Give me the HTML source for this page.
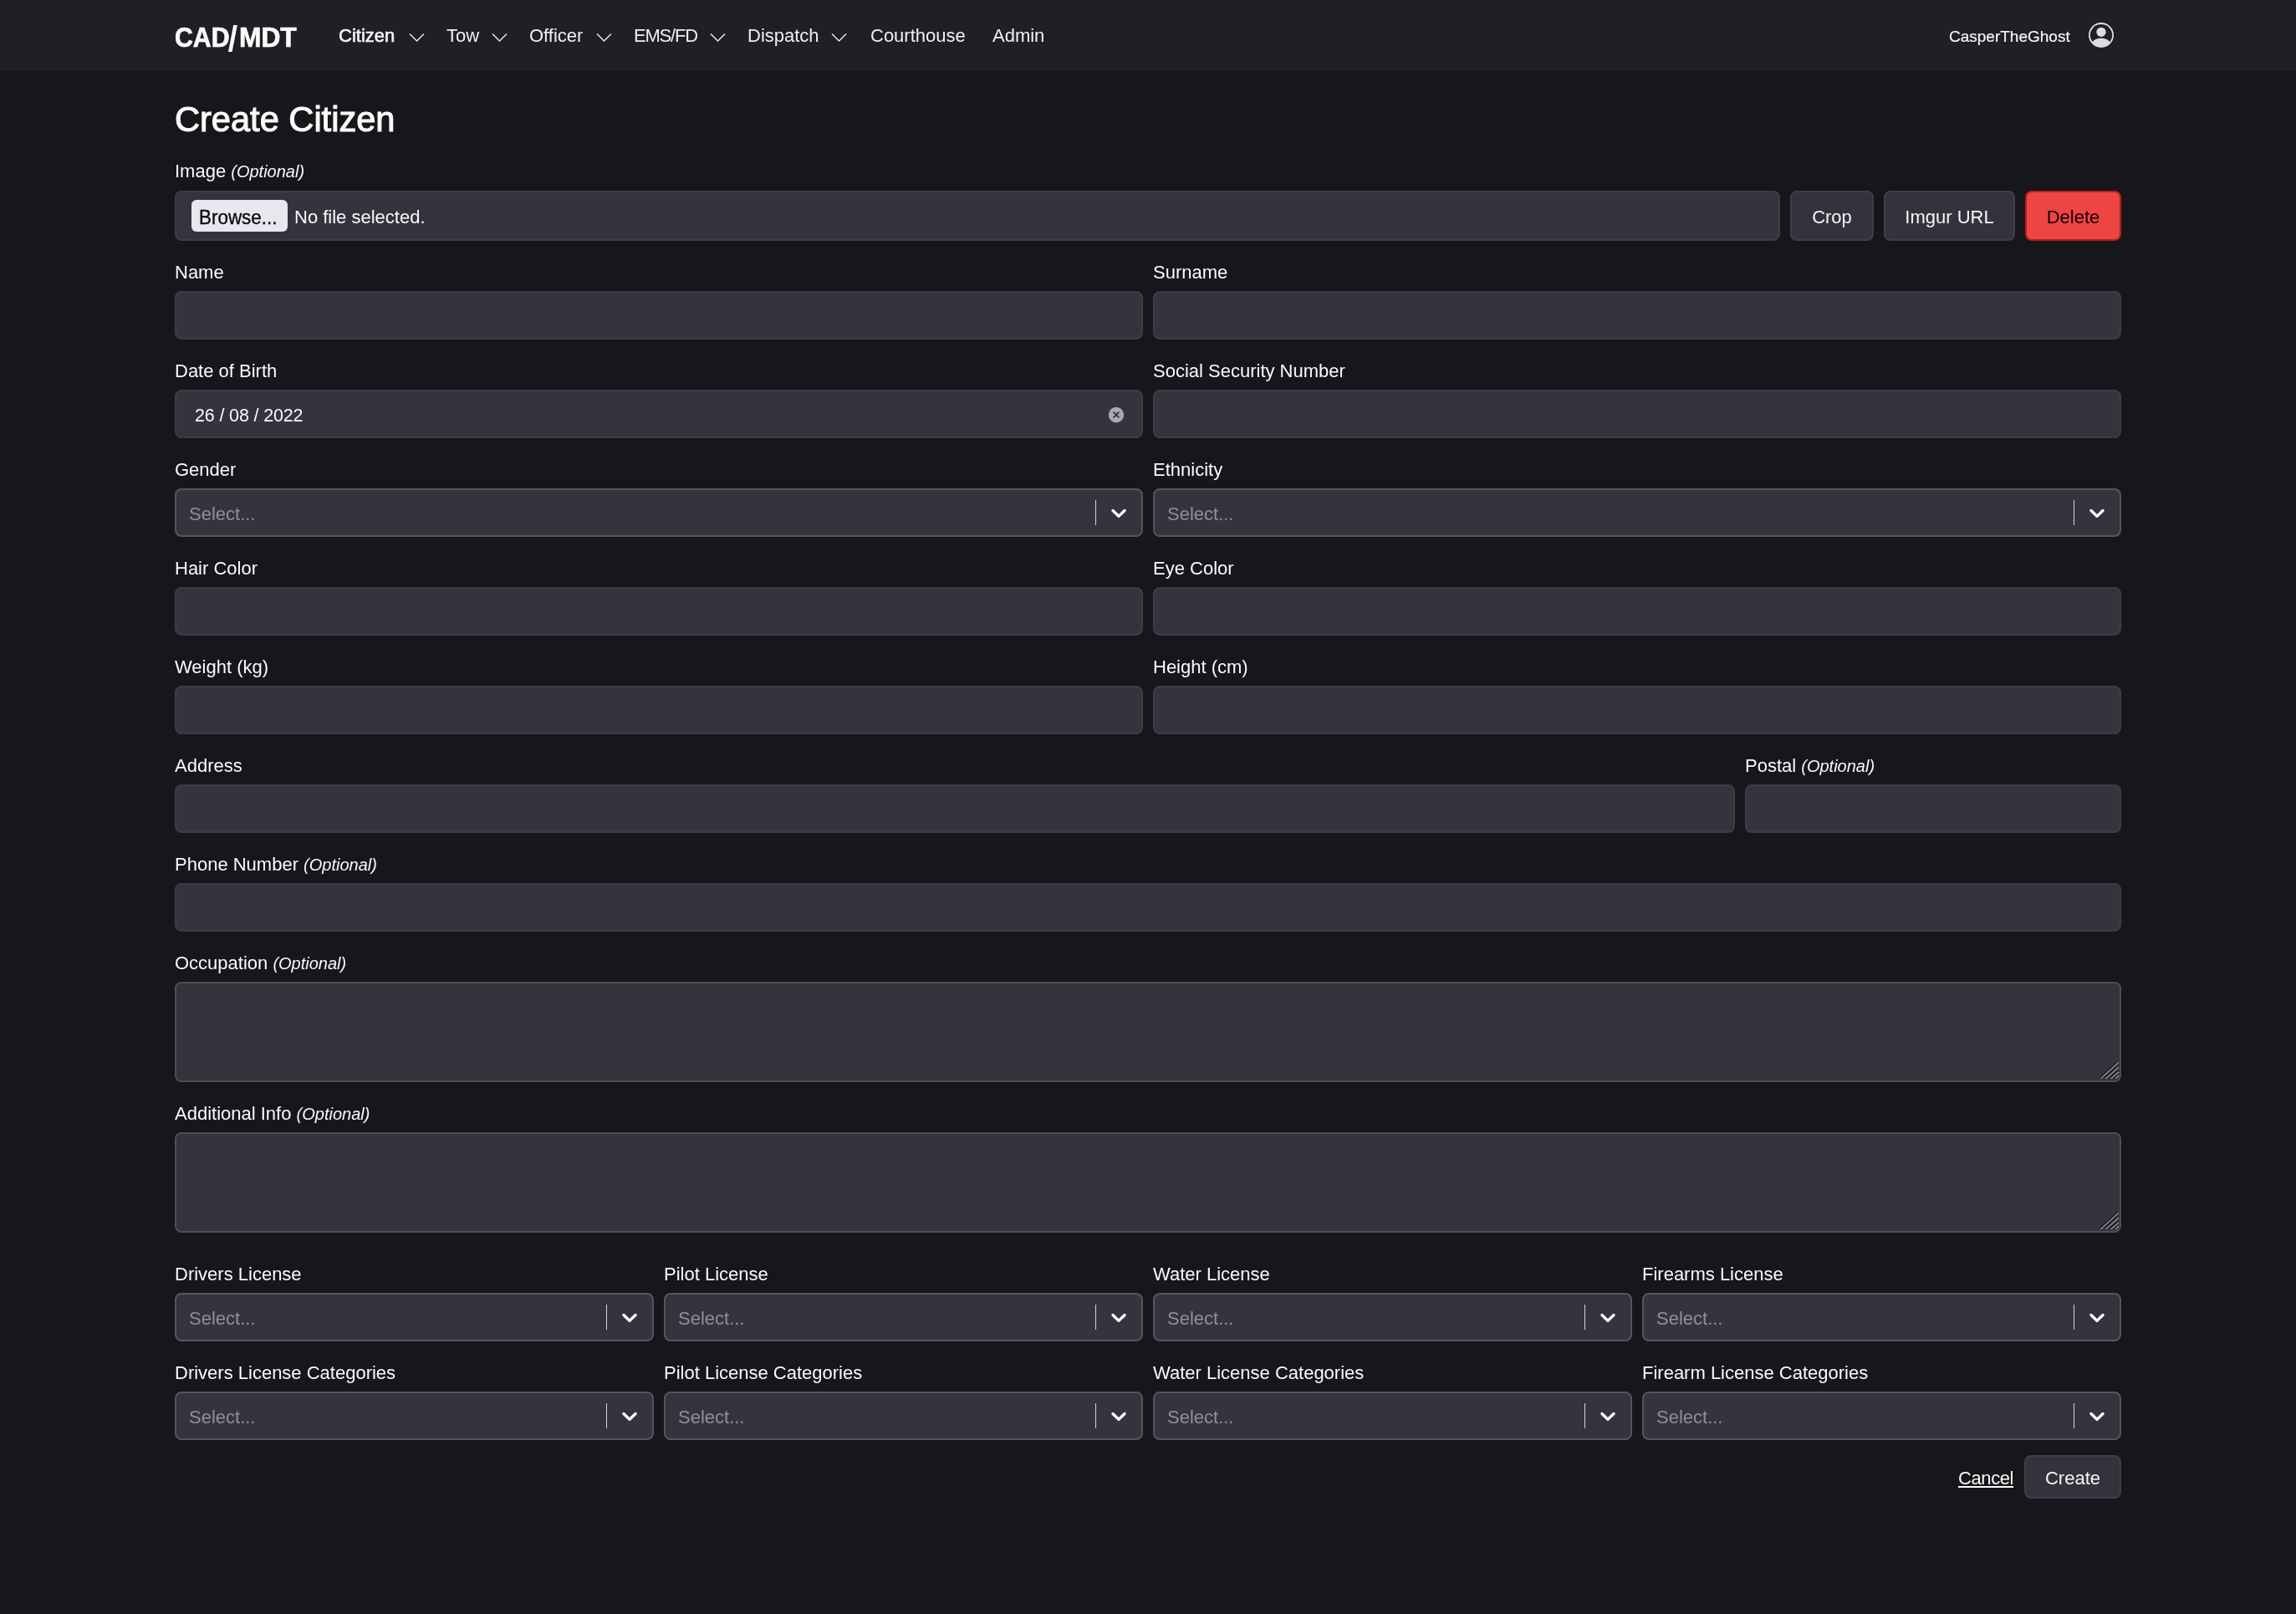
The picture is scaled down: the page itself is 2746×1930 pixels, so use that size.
<!DOCTYPE html>
<html><head><meta charset="utf-8"><title>Create Citizen</title>
<style>
*{box-sizing:border-box;margin:0;padding:0}
html,body{width:2746px;height:1930px;overflow:hidden;background:#17161b;font-family:"Liberation Sans",sans-serif;color:#fafafa}
.a{position:absolute;white-space:nowrap;line-height:1}
#nav{position:absolute;left:0;top:0;width:2746px;height:84px;background:#201f25}
.logo{font-weight:700;font-size:33px;transform-origin:0 0;-webkit-text-stroke:0.7px #fafafa}
.ni{font-size:22px;color:#f0f0f2}
.lbl{font-size:22px;color:#fafafa}
.lbl i{font-style:italic;font-size:20px}
.inp{position:absolute;height:58px;background:#35343e;border:2px solid #3d3c47;border-radius:8px}
.ta{position:absolute;background:#35343e;border:2px solid #4f4e57;border-radius:8px}
.sel{position:absolute;height:58px;background:#35343e;border:2px solid #56555f;border-radius:8px}
.ph{position:absolute;left:15px;top:18px;font-size:22px;line-height:1;color:#908f97;white-space:nowrap}
.sep{position:absolute;right:54px;top:12px;width:1px;height:30px;background:#d4d4d8}
.sel svg{position:absolute;right:12px;top:12px}
.btn{position:absolute;height:60px;background:#34333d;border:2px solid #3f3e48;border-radius:8px;font-size:22px;color:#f5f5f6;text-align:center;line-height:60px;white-space:nowrap}
</style></head>
<body><div id="root" style="position:absolute;left:0;top:0;width:2746px;height:1930px;will-change:transform">
<div id="nav"></div>
<div class="a logo" style="left:209px;top:28.3px;font-size:33px;transform:scaleX(0.917)">CAD</div>
<svg class="a" style="left:270px;top:28px" width="18" height="36" viewBox="0 0 18 36"><path d="M3 34 L7.6 34 L13.8 2 L9.2 2Z" fill="#fafafa"/></svg>
<div class="a logo" style="left:286px;top:28.3px;font-size:33px;transform:scaleX(0.962)">MDT</div>
<div class="a ni" style="left:405px;top:32.2px;font-size:22px;-webkit-text-stroke:0.6px #f5f5f7;color:#f5f5f7">Citizen</div>
<svg class="a" style="left:489px;top:39px" width="19" height="12" viewBox="0 0 19 12"><path d="M1 1.5 L9.5 10 L18 1.5" fill="none" stroke="#e8e8ec" stroke-width="1.5"/></svg>
<div class="a ni" style="left:534px;top:32.2px;font-size:22px;">Tow</div>
<svg class="a" style="left:588px;top:39px" width="19" height="12" viewBox="0 0 19 12"><path d="M1 1.5 L9.5 10 L18 1.5" fill="none" stroke="#e8e8ec" stroke-width="1.5"/></svg>
<div class="a ni" style="left:633px;top:32.2px;font-size:22px;">Officer</div>
<svg class="a" style="left:713px;top:39px" width="19" height="12" viewBox="0 0 19 12"><path d="M1 1.5 L9.5 10 L18 1.5" fill="none" stroke="#e8e8ec" stroke-width="1.5"/></svg>
<div class="a ni" style="left:758px;top:32.2px;font-size:22px;letter-spacing:-1.2px">EMS/FD</div>
<svg class="a" style="left:849px;top:39px" width="19" height="12" viewBox="0 0 19 12"><path d="M1 1.5 L9.5 10 L18 1.5" fill="none" stroke="#e8e8ec" stroke-width="1.5"/></svg>
<div class="a ni" style="left:894px;top:32.2px;font-size:22px;">Dispatch</div>
<svg class="a" style="left:994px;top:39px" width="19" height="12" viewBox="0 0 19 12"><path d="M1 1.5 L9.5 10 L18 1.5" fill="none" stroke="#e8e8ec" stroke-width="1.5"/></svg>
<div class="a ni" style="left:1041px;top:32.2px;font-size:22px;">Courthouse</div>
<div class="a ni" style="left:1187px;top:32.2px;font-size:22px;">Admin</div>
<div class="a ni" style="left:2331px;top:33.9px;font-size:19px;color:#f5f5f7;-webkit-text-stroke:0.2px #f5f5f7">CasperTheGhost</div>
<svg class="a" style="left:2498px;top:27px" width="30" height="30" viewBox="0 0 16 16" fill="#dcdce0"><path d="M11 6a3 3 0 1 1-6 0 3 3 0 0 1 6 0z"/><path fill-rule="evenodd" d="M0 8a8 8 0 1 1 16 0A8 8 0 0 1 0 8zm8-7a7 7 0 0 0-5.468 11.37C3.242 11.226 4.805 10 8 10s4.757 1.225 5.468 2.37A7 7 0 0 0 8 1z"/></svg>
<div class="a " style="left:209px;top:122.4px;font-size:42px;-webkit-text-stroke:1.1px #fafafa;transform:scaleX(0.99);transform-origin:0 0">Create Citizen</div>
<div class="a lbl" style="left:209px;top:194.2px;font-size:22px;">Image <i>(Optional)</i></div>
<div class="inp" style="left:209px;top:228px;width:1920px;height:60px"></div>
<div class="a" style="left:229px;top:239px;width:115px;height:38px;background:#e8e7ed;border-radius:6px"></div>
<div class="a " style="left:238px;top:249.1px;font-size:23px;color:#0a0a0a;-webkit-text-stroke:0.35px #0a0a0a;transform:scaleX(0.975);transform-origin:0 0">Browse...</div>
<div class="a " style="left:352px;top:249.0px;font-size:22px;">No file selected.</div>
<div class="btn" style="left:2141px;top:228px;width:100px;">Crop</div>
<div class="btn" style="left:2253px;top:228px;width:157px;">Imgur URL</div>
<div class="btn" style="left:2422px;top:228px;width:115px;background:#ef4444;border-color:#b41f1f;color:#120404">Delete</div>
<div class="a lbl" style="left:209px;top:314.9px;font-size:22px;">Name</div>
<div class="inp" style="left:209px;top:348px;width:1158px;height:58px"></div>
<div class="a lbl" style="left:1379px;top:314.9px;font-size:22px;">Surname</div>
<div class="inp" style="left:1379px;top:348px;width:1158px;height:58px"></div>
<div class="a lbl" style="left:209px;top:432.9px;font-size:22px;">Date of Birth</div>
<div class="inp" style="left:209px;top:466px;width:1158px;height:58px"></div>
<div class="a " style="left:233px;top:486.8px;font-size:21.5px;letter-spacing:-0.15px">26 / 08 / 2022</div>
<svg class="a" style="left:1325px;top:486px" width="20" height="20" viewBox="0 0 20 20"><circle cx="10" cy="10" r="9.2" fill="#a9a8ae"/><path d="M6.6 6.6 L13.4 13.4 M13.4 6.6 L6.6 13.4" stroke="#35343e" stroke-width="1.8"/></svg>
<div class="a lbl" style="left:1379px;top:432.9px;font-size:22px;">Social Security Number</div>
<div class="inp" style="left:1379px;top:466px;width:1158px;height:58px"></div>
<div class="a lbl" style="left:209px;top:550.9px;font-size:22px;">Gender</div>
<div class="sel" style="left:209px;top:584px;width:1158px"><div class="ph">Select...</div><div class="sep"></div><svg width="30" height="30" viewBox="0 0 20 20" fill="#fff"><path d="M4.516 7.548c0.436-0.446 1.043-0.481 1.576 0l3.908 3.747 3.908-3.747c0.533-0.481 1.141-0.446 1.574 0 0.436 0.445 0.408 1.197 0 1.615-0.406 0.418-4.695 4.502-4.695 4.502-0.217 0.223-0.502 0.335-0.787 0.335s-0.57-0.112-0.789-0.335c0 0-4.287-4.084-4.695-4.502s-0.436-1.17 0-1.615z"/></svg></div>
<div class="a lbl" style="left:1379px;top:550.9px;font-size:22px;">Ethnicity</div>
<div class="sel" style="left:1379px;top:584px;width:1158px"><div class="ph">Select...</div><div class="sep"></div><svg width="30" height="30" viewBox="0 0 20 20" fill="#fff"><path d="M4.516 7.548c0.436-0.446 1.043-0.481 1.576 0l3.908 3.747 3.908-3.747c0.533-0.481 1.141-0.446 1.574 0 0.436 0.445 0.408 1.197 0 1.615-0.406 0.418-4.695 4.502-4.695 4.502-0.217 0.223-0.502 0.335-0.787 0.335s-0.57-0.112-0.789-0.335c0 0-4.287-4.084-4.695-4.502s-0.436-1.17 0-1.615z"/></svg></div>
<div class="a lbl" style="left:209px;top:668.9px;font-size:22px;">Hair Color</div>
<div class="inp" style="left:209px;top:702px;width:1158px;height:58px"></div>
<div class="a lbl" style="left:1379px;top:668.9px;font-size:22px;">Eye Color</div>
<div class="inp" style="left:1379px;top:702px;width:1158px;height:58px"></div>
<div class="a lbl" style="left:209px;top:786.9px;font-size:22px;">Weight (kg)</div>
<div class="inp" style="left:209px;top:820px;width:1158px;height:58px"></div>
<div class="a lbl" style="left:1379px;top:786.9px;font-size:22px;">Height (cm)</div>
<div class="inp" style="left:1379px;top:820px;width:1158px;height:58px"></div>
<div class="a lbl" style="left:209px;top:904.9px;font-size:22px;">Address</div>
<div class="inp" style="left:209px;top:938px;width:1866px;height:58px"></div>
<div class="a lbl" style="left:2087px;top:904.9px;font-size:22px;">Postal <i>(Optional)</i></div>
<div class="inp" style="left:2087px;top:938px;width:450px;height:58px"></div>
<div class="a lbl" style="left:209px;top:1022.9px;font-size:22px;">Phone Number <i>(Optional)</i></div>
<div class="inp" style="left:209px;top:1056px;width:2328px;height:58px"></div>
<div class="a lbl" style="left:209px;top:1140.9px;font-size:22px;">Occupation <i>(Optional)</i></div>
<div class="ta" style="left:209px;top:1174px;width:2328px;height:120px"></div>
<div class="a lbl" style="left:209px;top:1320.9px;font-size:22px;">Additional Info <i>(Optional)</i></div>
<div class="ta" style="left:209px;top:1354px;width:2328px;height:120px"></div>
<svg class="a" style="left:2510px;top:1268px" width="26" height="24" viewBox="0 0 26 24"><path d="M1.4 20.900000000000002 L23.0 1.2000000000000002 M7.4 20.900000000000002 L23.0 7.1 M13.6 20.900000000000002 L23.0 13.1 M19.6 20.6 L23.1 17.1" stroke="#101014" stroke-width="1.1"/><path d="M2.3 21.8 L23.9 2.1 M8.3 21.8 L23.9 8 M14.5 21.8 L23.9 14 M20.5 21.5 L24 18" stroke="#a8a7ae" stroke-width="1.1"/></svg>
<svg class="a" style="left:2510px;top:1448px" width="26" height="24" viewBox="0 0 26 24"><path d="M1.4 20.900000000000002 L23.0 1.2000000000000002 M7.4 20.900000000000002 L23.0 7.1 M13.6 20.900000000000002 L23.0 13.1 M19.6 20.6 L23.1 17.1" stroke="#101014" stroke-width="1.1"/><path d="M2.3 21.8 L23.9 2.1 M8.3 21.8 L23.9 8 M14.5 21.8 L23.9 14 M20.5 21.5 L24 18" stroke="#a8a7ae" stroke-width="1.1"/></svg>
<div class="a lbl" style="left:209px;top:1512.9px;font-size:22px;">Drivers License</div>
<div class="sel" style="left:209px;top:1546px;width:573px"><div class="ph">Select...</div><div class="sep"></div><svg width="30" height="30" viewBox="0 0 20 20" fill="#fff"><path d="M4.516 7.548c0.436-0.446 1.043-0.481 1.576 0l3.908 3.747 3.908-3.747c0.533-0.481 1.141-0.446 1.574 0 0.436 0.445 0.408 1.197 0 1.615-0.406 0.418-4.695 4.502-4.695 4.502-0.217 0.223-0.502 0.335-0.787 0.335s-0.57-0.112-0.789-0.335c0 0-4.287-4.084-4.695-4.502s-0.436-1.17 0-1.615z"/></svg></div>
<div class="a lbl" style="left:794px;top:1512.9px;font-size:22px;">Pilot License</div>
<div class="sel" style="left:794px;top:1546px;width:573px"><div class="ph">Select...</div><div class="sep"></div><svg width="30" height="30" viewBox="0 0 20 20" fill="#fff"><path d="M4.516 7.548c0.436-0.446 1.043-0.481 1.576 0l3.908 3.747 3.908-3.747c0.533-0.481 1.141-0.446 1.574 0 0.436 0.445 0.408 1.197 0 1.615-0.406 0.418-4.695 4.502-4.695 4.502-0.217 0.223-0.502 0.335-0.787 0.335s-0.57-0.112-0.789-0.335c0 0-4.287-4.084-4.695-4.502s-0.436-1.17 0-1.615z"/></svg></div>
<div class="a lbl" style="left:1379px;top:1512.9px;font-size:22px;">Water License</div>
<div class="sel" style="left:1379px;top:1546px;width:573px"><div class="ph">Select...</div><div class="sep"></div><svg width="30" height="30" viewBox="0 0 20 20" fill="#fff"><path d="M4.516 7.548c0.436-0.446 1.043-0.481 1.576 0l3.908 3.747 3.908-3.747c0.533-0.481 1.141-0.446 1.574 0 0.436 0.445 0.408 1.197 0 1.615-0.406 0.418-4.695 4.502-4.695 4.502-0.217 0.223-0.502 0.335-0.787 0.335s-0.57-0.112-0.789-0.335c0 0-4.287-4.084-4.695-4.502s-0.436-1.17 0-1.615z"/></svg></div>
<div class="a lbl" style="left:1964px;top:1512.9px;font-size:22px;">Firearms License</div>
<div class="sel" style="left:1964px;top:1546px;width:573px"><div class="ph">Select...</div><div class="sep"></div><svg width="30" height="30" viewBox="0 0 20 20" fill="#fff"><path d="M4.516 7.548c0.436-0.446 1.043-0.481 1.576 0l3.908 3.747 3.908-3.747c0.533-0.481 1.141-0.446 1.574 0 0.436 0.445 0.408 1.197 0 1.615-0.406 0.418-4.695 4.502-4.695 4.502-0.217 0.223-0.502 0.335-0.787 0.335s-0.57-0.112-0.789-0.335c0 0-4.287-4.084-4.695-4.502s-0.436-1.17 0-1.615z"/></svg></div>
<div class="a lbl" style="left:209px;top:1630.9px;font-size:22px;">Drivers License Categories</div>
<div class="sel" style="left:209px;top:1664px;width:573px"><div class="ph">Select...</div><div class="sep"></div><svg width="30" height="30" viewBox="0 0 20 20" fill="#fff"><path d="M4.516 7.548c0.436-0.446 1.043-0.481 1.576 0l3.908 3.747 3.908-3.747c0.533-0.481 1.141-0.446 1.574 0 0.436 0.445 0.408 1.197 0 1.615-0.406 0.418-4.695 4.502-4.695 4.502-0.217 0.223-0.502 0.335-0.787 0.335s-0.57-0.112-0.789-0.335c0 0-4.287-4.084-4.695-4.502s-0.436-1.17 0-1.615z"/></svg></div>
<div class="a lbl" style="left:794px;top:1630.9px;font-size:22px;">Pilot License Categories</div>
<div class="sel" style="left:794px;top:1664px;width:573px"><div class="ph">Select...</div><div class="sep"></div><svg width="30" height="30" viewBox="0 0 20 20" fill="#fff"><path d="M4.516 7.548c0.436-0.446 1.043-0.481 1.576 0l3.908 3.747 3.908-3.747c0.533-0.481 1.141-0.446 1.574 0 0.436 0.445 0.408 1.197 0 1.615-0.406 0.418-4.695 4.502-4.695 4.502-0.217 0.223-0.502 0.335-0.787 0.335s-0.57-0.112-0.789-0.335c0 0-4.287-4.084-4.695-4.502s-0.436-1.17 0-1.615z"/></svg></div>
<div class="a lbl" style="left:1379px;top:1630.9px;font-size:22px;">Water License Categories</div>
<div class="sel" style="left:1379px;top:1664px;width:573px"><div class="ph">Select...</div><div class="sep"></div><svg width="30" height="30" viewBox="0 0 20 20" fill="#fff"><path d="M4.516 7.548c0.436-0.446 1.043-0.481 1.576 0l3.908 3.747 3.908-3.747c0.533-0.481 1.141-0.446 1.574 0 0.436 0.445 0.408 1.197 0 1.615-0.406 0.418-4.695 4.502-4.695 4.502-0.217 0.223-0.502 0.335-0.787 0.335s-0.57-0.112-0.789-0.335c0 0-4.287-4.084-4.695-4.502s-0.436-1.17 0-1.615z"/></svg></div>
<div class="a lbl" style="left:1964px;top:1630.9px;font-size:22px;">Firearm License Categories</div>
<div class="sel" style="left:1964px;top:1664px;width:573px"><div class="ph">Select...</div><div class="sep"></div><svg width="30" height="30" viewBox="0 0 20 20" fill="#fff"><path d="M4.516 7.548c0.436-0.446 1.043-0.481 1.576 0l3.908 3.747 3.908-3.747c0.533-0.481 1.141-0.446 1.574 0 0.436 0.445 0.408 1.197 0 1.615-0.406 0.418-4.695 4.502-4.695 4.502-0.217 0.223-0.502 0.335-0.787 0.335s-0.57-0.112-0.789-0.335c0 0-4.287-4.084-4.695-4.502s-0.436-1.17 0-1.615z"/></svg></div>
<div class="a " style="left:2342px;top:1756.9px;font-size:22px;text-decoration:underline;text-underline-offset:2px;text-decoration-thickness:1.5px;letter-spacing:-0.4px">Cancel</div>
<div class="btn" style="left:2421px;top:1740px;width:116px;height:52px;line-height:52px">Create</div>
</div></body></html>
